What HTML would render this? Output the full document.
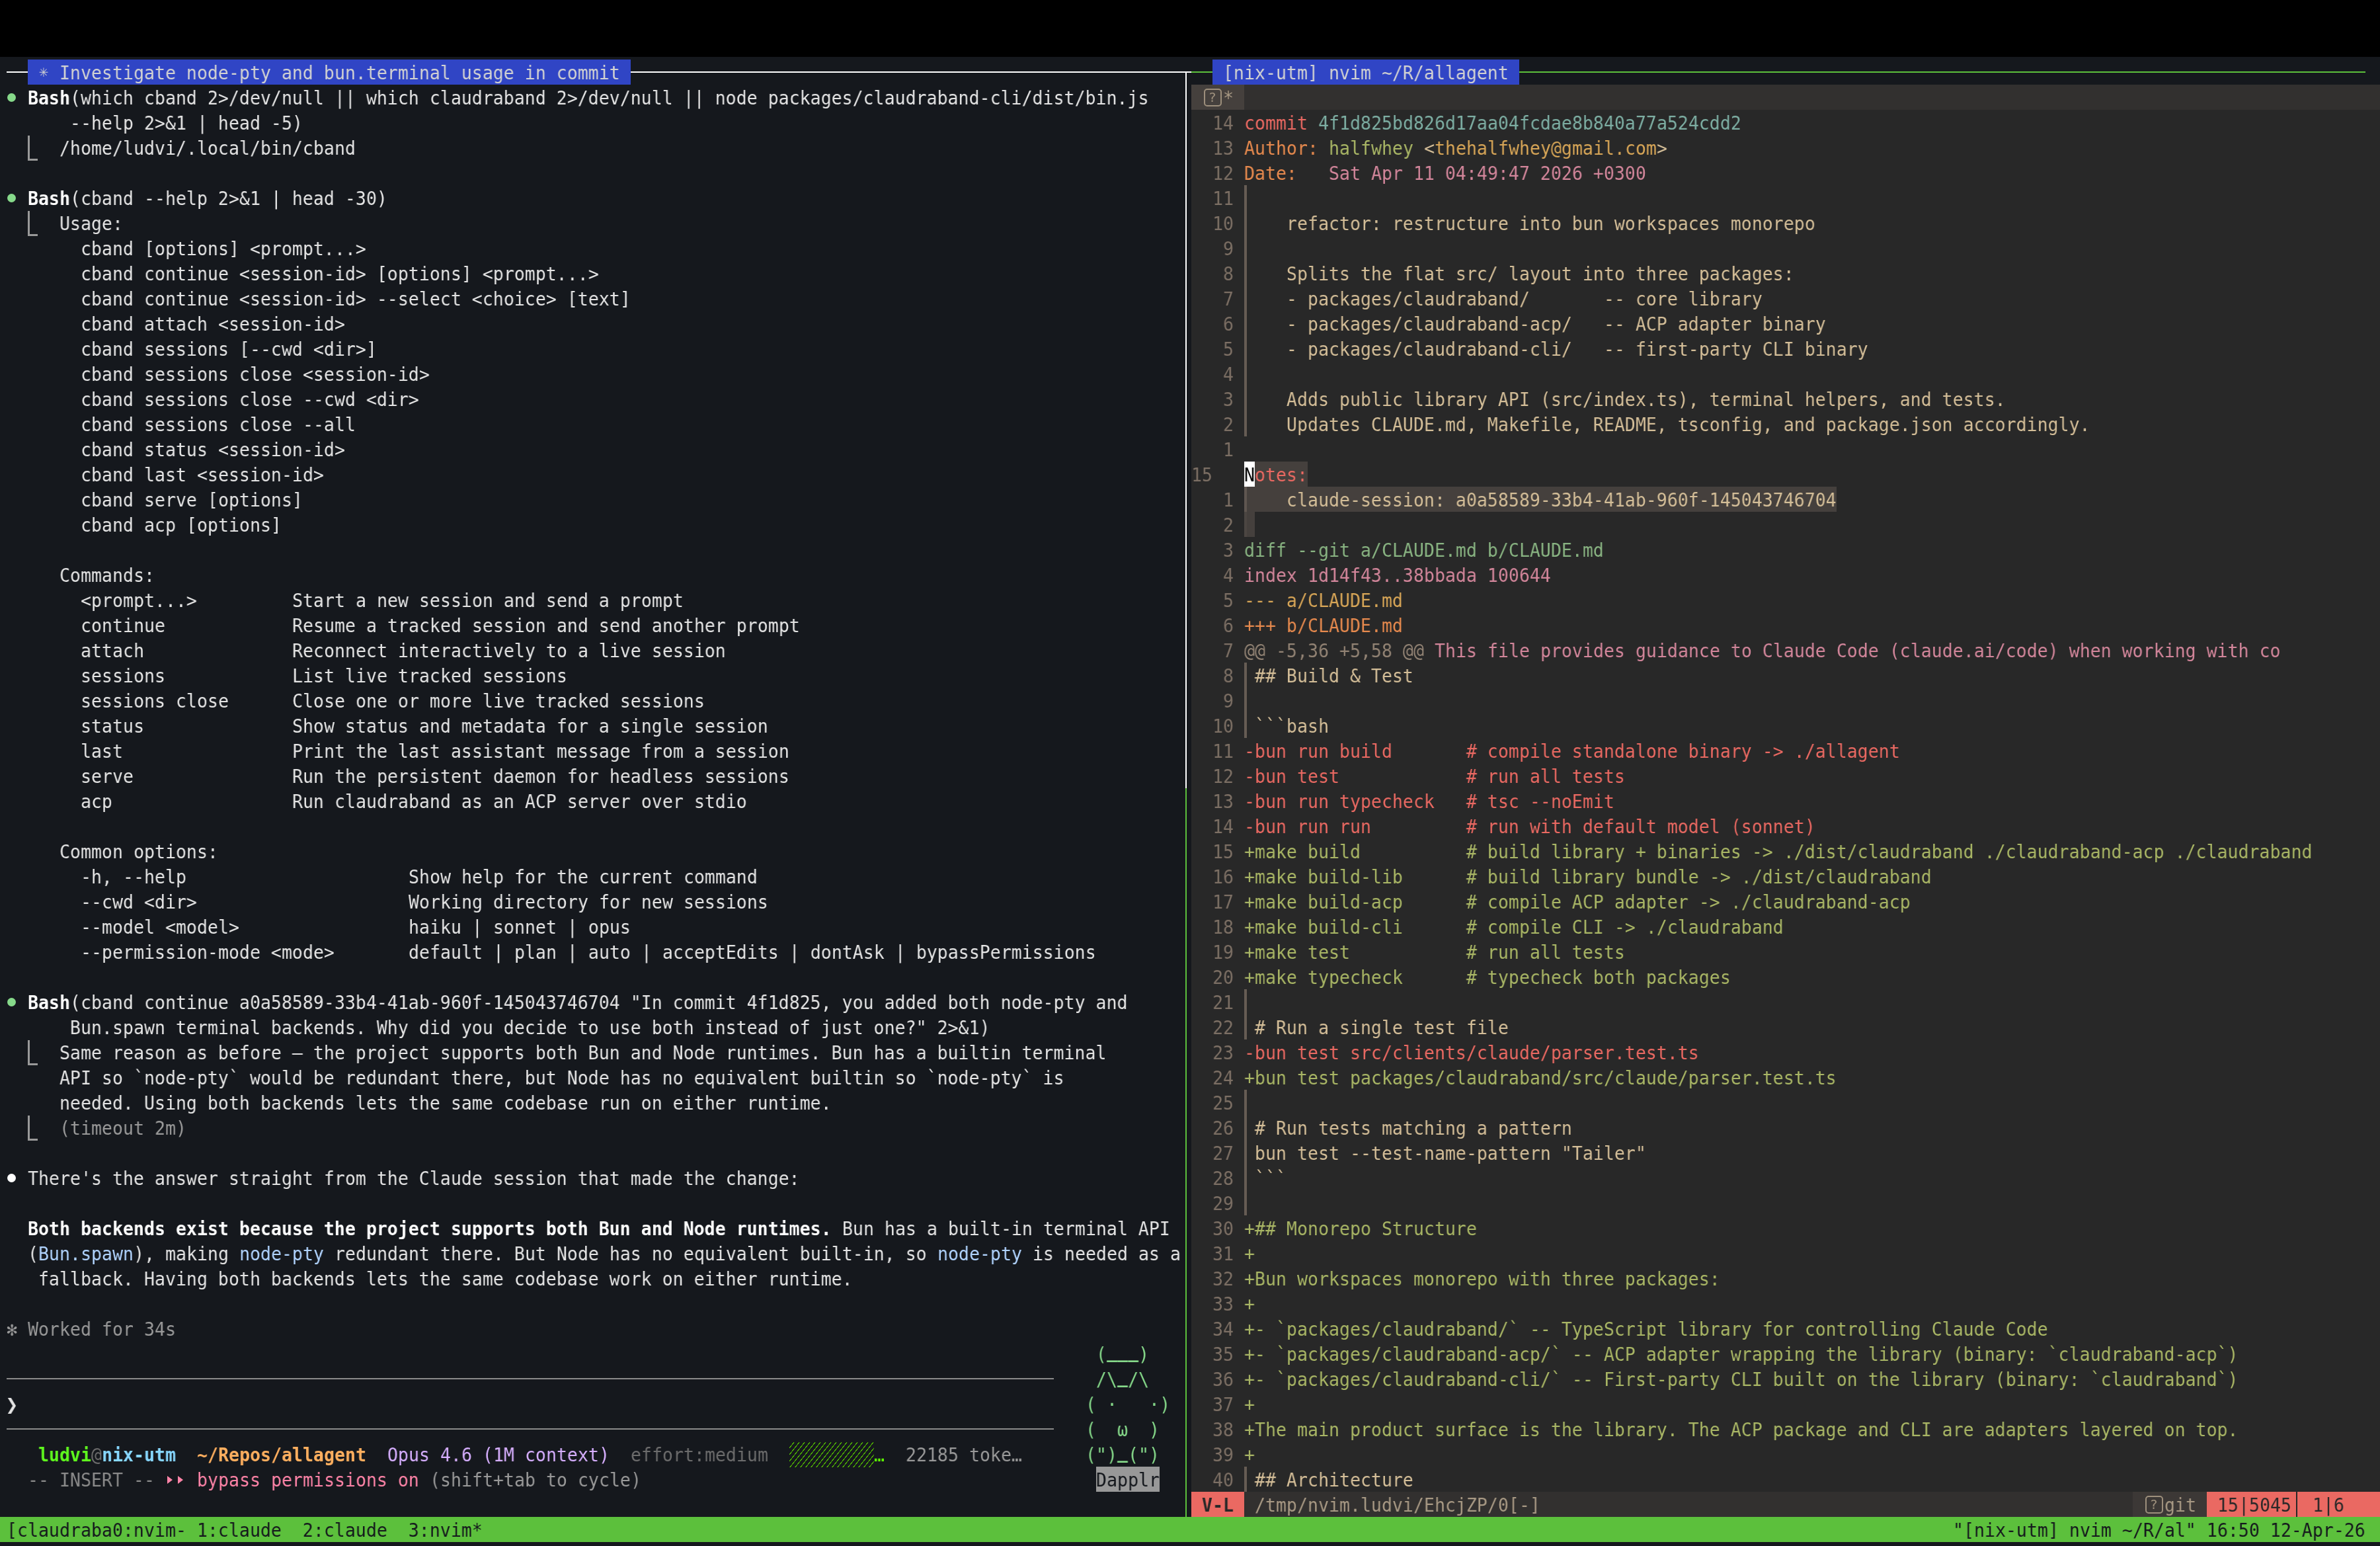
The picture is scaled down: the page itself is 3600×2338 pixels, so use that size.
<!DOCTYPE html>
<html lang="en"><head><meta charset="utf-8"><title>tmux</title>
<style>
html,body{margin:0;padding:0;background:#15181d;}
body{width:3600px;height:2338px;position:relative;overflow:hidden;font-family:"DejaVu Sans Mono","Liberation Mono",monospace;}
#sh{will-change:transform;}
#bg,#sh,#tx{position:absolute;left:0;top:0;width:3600px;height:2338px;}
#bg b,#sh i{position:absolute;display:block;}
#tx{will-change:transform;left:10px;width:3812.908px;transform:scaleX(0.93577);transform-origin:0 0;font-size:28.4px;line-height:38px;}
#tx span{position:absolute;white-space:pre;height:38px;font-kerning:none;font-variant-ligatures:none;}
#tx span.B{font-weight:bold;}
#sh i.ic{box-sizing:border-box;width:27px;height:27px;border:2.4px solid;border-radius:5px;font:normal 20px/22px "DejaVu Sans","Liberation Sans",sans-serif;text-align:center;}
</style></head><body>
<div id="bg"><b style="left:0px;top:0px;width:3600px;height:86px;background:#000000"></b><b style="left:1802px;top:128px;width:1798px;height:2166px;background:#282828"></b><b style="left:1802px;top:128px;width:1798px;height:38px;background:#32302f"></b><b style="left:1802px;top:128px;width:80px;height:38px;background:#45403d"></b><b style="left:0px;top:2294px;width:3600px;height:38px;background:#5cc03c"></b><b style="left:10px;top:108px;width:32px;height:2px;background:#ffffff"></b><b style="left:954px;top:108px;width:848px;height:2px;background:#ffffff"></b><b style="left:1802px;top:108px;width:32px;height:2px;background:#5cc03c"></b><b style="left:2298px;top:108px;width:1280px;height:2px;background:#5cc03c"></b><b style="left:1793px;top:108px;width:2px;height:1084px;background:#ffffff"></b><b style="left:1793px;top:1192px;width:2px;height:1102px;background:#5cc03c"></b><b style="left:42px;top:90px;width:912px;height:38px;background:#3045c5"></b><b style="left:1834px;top:90px;width:464px;height:38px;background:#3045c5"></b><b style="left:10px;top:2084px;width:1584px;height:2px;background:#8a8a8a"></b><b style="left:10px;top:2160px;width:1584px;height:2px;background:#8a8a8a"></b><b style="left:1658px;top:2218px;width:96px;height:38px;background:#989898"></b><b style="left:1882px;top:280px;width:4px;height:38px;background:#665c54"></b><b style="left:1882px;top:318px;width:4px;height:38px;background:#665c54"></b><b style="left:1882px;top:356px;width:4px;height:38px;background:#665c54"></b><b style="left:1882px;top:394px;width:4px;height:38px;background:#665c54"></b><b style="left:1882px;top:432px;width:4px;height:38px;background:#665c54"></b><b style="left:1882px;top:470px;width:4px;height:38px;background:#665c54"></b><b style="left:1882px;top:508px;width:4px;height:38px;background:#665c54"></b><b style="left:1882px;top:546px;width:4px;height:38px;background:#665c54"></b><b style="left:1882px;top:584px;width:4px;height:38px;background:#665c54"></b><b style="left:1882px;top:622px;width:4px;height:38px;background:#665c54"></b><b style="left:1882px;top:698px;width:96px;height:38px;background:#45403d"></b><b style="left:1882px;top:698px;width:16px;height:38px;background:#ffffff"></b><b style="left:1882px;top:736px;width:896px;height:38px;background:#45403d"></b><b style="left:1882px;top:736px;width:4px;height:38px;background:#5f5650"></b><b style="left:1882px;top:774px;width:16px;height:38px;background:#45403d"></b><b style="left:1882px;top:774px;width:4px;height:38px;background:#4c4642"></b><b style="left:1882px;top:1002px;width:4px;height:38px;background:#665c54"></b><b style="left:1882px;top:1040px;width:4px;height:38px;background:#665c54"></b><b style="left:1882px;top:1078px;width:4px;height:38px;background:#665c54"></b><b style="left:1882px;top:1496px;width:4px;height:38px;background:#665c54"></b><b style="left:1882px;top:1534px;width:4px;height:38px;background:#665c54"></b><b style="left:1882px;top:1648px;width:4px;height:38px;background:#665c54"></b><b style="left:1882px;top:1686px;width:4px;height:38px;background:#665c54"></b><b style="left:1882px;top:1724px;width:4px;height:38px;background:#665c54"></b><b style="left:1882px;top:1762px;width:4px;height:38px;background:#665c54"></b><b style="left:1882px;top:1800px;width:4px;height:38px;background:#665c54"></b><b style="left:1882px;top:2218px;width:4px;height:38px;background:#665c54"></b><b style="left:1802px;top:2256px;width:1798px;height:38px;background:#32302f"></b><b style="left:1802px;top:2256px;width:80px;height:38px;background:#ea6962"></b><b style="left:3226px;top:2256px;width:112px;height:38px;background:#3c3836"></b><b style="left:3338px;top:2256px;width:262px;height:38px;background:#ea6962"></b><b style="left:3473px;top:2256px;width:2px;height:38px;background:#282828"></b></div>
<div id="sh"><i style="left:11.0px;top:141.0px;width:13px;height:13px;border-radius:50%;background:#86d98a"></i><i style="left:42px;top:204.5px;width:3px;height:38px;background:#999999"></i><i style="left:42px;top:240px;width:15px;height:2.5px;background:#999999"></i><i style="left:11.0px;top:293.0px;width:13px;height:13px;border-radius:50%;background:#86d98a"></i><i style="left:42px;top:318.5px;width:3px;height:38px;background:#999999"></i><i style="left:42px;top:354px;width:15px;height:2.5px;background:#999999"></i><i style="left:11.0px;top:1509.0px;width:13px;height:13px;border-radius:50%;background:#86d98a"></i><i style="left:42px;top:1572.5px;width:3px;height:38px;background:#999999"></i><i style="left:42px;top:1608px;width:15px;height:2.5px;background:#999999"></i><i style="left:42px;top:1686.5px;width:3px;height:38px;background:#999999"></i><i style="left:42px;top:1722px;width:15px;height:2.5px;background:#999999"></i><i style="left:11.0px;top:1775.0px;width:13px;height:13px;border-radius:50%;background:#ffffff"></i><i style="left:1194px;top:2181px;width:128px;height:37.5px;background:repeating-linear-gradient(128.6deg,transparent 0,transparent 4.9px,#52bb00 5.1px,#52bb00 6.0px,transparent 6.25px)"></i><i style="left:253px;top:2232px;width:0;height:0;border-left:8px solid #ff84a8;border-top:6px solid transparent;border-bottom:6px solid transparent"></i><i style="left:269px;top:2232px;width:0;height:0;border-left:8px solid #ff84a8;border-top:6px solid transparent;border-bottom:6px solid transparent"></i><i class="ic" style="left:1820.5px;top:134px;border-color:#9d8f7c;color:#9d8f7c">?</i><i class="ic" style="left:3244.5px;top:2262px;border-color:#9d8f7c;color:#9d8f7c">?</i></div>
<div id="tx">
<span style="left:51.295px;top:91.5px;color:#d2d2d2;font-size:0.86em;margin:-2.5px 0 0 1.3px">✳</span>
<span style="left:85.491px;top:91.5px;color:#d2d2d2">Investigate node-pty and bun.terminal usage in commit</span>
<span style="left:1949.200px;top:91.5px;color:#d2d2d2"> [nix-utm] nvim ~/R/allagent </span>
<span class="B" style="left:34.196px;top:129.5px;color:#ffffff">Bash</span>
<span style="left:102.589px;top:129.5px;color:#e4e4e4">(which cband 2&gt;/dev/null || which claudraband 2&gt;/dev/null || node packages/claudraband-cli/dist/bin.js</span>
<span style="left:102.589px;top:167.5px;color:#e4e4e4">--help 2&gt;&amp;1 | head -5)</span>
<span style="left:85.491px;top:205.5px;color:#e4e4e4">/home/ludvi/.local/bin/cband</span>
<span class="B" style="left:34.196px;top:281.5px;color:#ffffff">Bash</span>
<span style="left:102.589px;top:281.5px;color:#e4e4e4">(cband --help 2&gt;&amp;1 | head -30)</span>
<span style="left:85.491px;top:319.5px;color:#e4e4e4">Usage:</span>
<span style="left:119.688px;top:357.5px;color:#e4e4e4">cband [options] &lt;prompt...&gt;</span>
<span style="left:119.688px;top:395.5px;color:#e4e4e4">cband continue &lt;session-id&gt; [options] &lt;prompt...&gt;</span>
<span style="left:119.688px;top:433.5px;color:#e4e4e4">cband continue &lt;session-id&gt; --select &lt;choice&gt; [text]</span>
<span style="left:119.688px;top:471.5px;color:#e4e4e4">cband attach &lt;session-id&gt;</span>
<span style="left:119.688px;top:509.5px;color:#e4e4e4">cband sessions [--cwd &lt;dir&gt;]</span>
<span style="left:119.688px;top:547.5px;color:#e4e4e4">cband sessions close &lt;session-id&gt;</span>
<span style="left:119.688px;top:585.5px;color:#e4e4e4">cband sessions close --cwd &lt;dir&gt;</span>
<span style="left:119.688px;top:623.5px;color:#e4e4e4">cband sessions close --all</span>
<span style="left:119.688px;top:661.5px;color:#e4e4e4">cband status &lt;session-id&gt;</span>
<span style="left:119.688px;top:699.5px;color:#e4e4e4">cband last &lt;session-id&gt;</span>
<span style="left:119.688px;top:737.5px;color:#e4e4e4">cband serve [options]</span>
<span style="left:119.688px;top:775.5px;color:#e4e4e4">cband acp [options]</span>
<span style="left:85.491px;top:851.5px;color:#e4e4e4">Commands:</span>
<span style="left:119.688px;top:889.5px;color:#e4e4e4">&lt;prompt...&gt;</span>
<span style="left:461.653px;top:889.5px;color:#e4e4e4">Start a new session and send a prompt</span>
<span style="left:119.688px;top:927.5px;color:#e4e4e4">continue</span>
<span style="left:461.653px;top:927.5px;color:#e4e4e4">Resume a tracked session and send another prompt</span>
<span style="left:119.688px;top:965.5px;color:#e4e4e4">attach</span>
<span style="left:461.653px;top:965.5px;color:#e4e4e4">Reconnect interactively to a live session</span>
<span style="left:119.688px;top:1003.5px;color:#e4e4e4">sessions</span>
<span style="left:461.653px;top:1003.5px;color:#e4e4e4">List live tracked sessions</span>
<span style="left:119.688px;top:1041.5px;color:#e4e4e4">sessions close</span>
<span style="left:461.653px;top:1041.5px;color:#e4e4e4">Close one or more live tracked sessions</span>
<span style="left:119.688px;top:1079.5px;color:#e4e4e4">status</span>
<span style="left:461.653px;top:1079.5px;color:#e4e4e4">Show status and metadata for a single session</span>
<span style="left:119.688px;top:1117.5px;color:#e4e4e4">last</span>
<span style="left:461.653px;top:1117.5px;color:#e4e4e4">Print the last assistant message from a session</span>
<span style="left:119.688px;top:1155.5px;color:#e4e4e4">serve</span>
<span style="left:461.653px;top:1155.5px;color:#e4e4e4">Run the persistent daemon for headless sessions</span>
<span style="left:119.688px;top:1193.5px;color:#e4e4e4">acp</span>
<span style="left:461.653px;top:1193.5px;color:#e4e4e4">Run claudraband as an ACP server over stdio</span>
<span style="left:85.491px;top:1269.5px;color:#e4e4e4">Common options:</span>
<span style="left:119.688px;top:1307.5px;color:#e4e4e4">-h, --help</span>
<span style="left:649.733px;top:1307.5px;color:#e4e4e4">Show help for the current command</span>
<span style="left:119.688px;top:1345.5px;color:#e4e4e4">--cwd &lt;dir&gt;</span>
<span style="left:649.733px;top:1345.5px;color:#e4e4e4">Working directory for new sessions</span>
<span style="left:119.688px;top:1383.5px;color:#e4e4e4">--model &lt;model&gt;</span>
<span style="left:649.733px;top:1383.5px;color:#e4e4e4">haiku | sonnet | opus</span>
<span style="left:119.688px;top:1421.5px;color:#e4e4e4">--permission-mode &lt;mode&gt;</span>
<span style="left:649.733px;top:1421.5px;color:#e4e4e4">default | plan | auto | acceptEdits | dontAsk | bypassPermissions</span>
<span class="B" style="left:34.196px;top:1497.5px;color:#ffffff">Bash</span>
<span style="left:102.589px;top:1497.5px;color:#e4e4e4">(cband continue a0a58589-33b4-41ab-960f-145043746704 "In commit 4f1d825, you added both node-pty and</span>
<span style="left:102.589px;top:1535.5px;color:#e4e4e4">Bun.spawn terminal backends. Why did you decide to use both instead of just one?" 2&gt;&amp;1)</span>
<span style="left:85.491px;top:1573.5px;color:#e4e4e4">Same reason as before — the project supports both Bun and Node runtimes. Bun has a builtin terminal</span>
<span style="left:85.491px;top:1611.5px;color:#e4e4e4">API so `node-pty` would be redundant there, but Node has no equivalent builtin so `node-pty` is</span>
<span style="left:85.491px;top:1649.5px;color:#e4e4e4">needed. Using both backends lets the same codebase run on either runtime.</span>
<span style="left:85.491px;top:1687.5px;color:#999999">(timeout 2m)</span>
<span style="left:34.196px;top:1763.5px;color:#e4e4e4">There's the answer straight from the Claude session that made the change:</span>
<span class="B" style="left:34.196px;top:1839.5px;color:#ffffff">Both backends exist because the project supports both Bun and Node runtimes.</span>
<span style="left:1333.663px;top:1839.5px;color:#e4e4e4"> Bun has a built-in terminal API</span>
<span style="left:34.196px;top:1877.5px;color:#e4e4e4">(</span>
<span style="left:51.295px;top:1877.5px;color:#b1d4ff">Bun.spawn</span>
<span style="left:205.179px;top:1877.5px;color:#e4e4e4">), making </span>
<span style="left:376.161px;top:1877.5px;color:#b1d4ff">node-pty</span>
<span style="left:512.947px;top:1877.5px;color:#e4e4e4"> redundant there. But Node has no equivalent built-in, so </span>
<span style="left:1504.645px;top:1877.5px;color:#b1d4ff">node-pty</span>
<span style="left:1641.431px;top:1877.5px;color:#e4e4e4"> is needed as a</span>
<span style="left:51.295px;top:1915.5px;color:#e4e4e4">fallback. Having both backends lets the same codebase work on either runtime.</span>
<span style="left:0.000px;top:1991.5px;color:#999999">✻</span>
<span style="left:17.098px;top:1991.5px;color:#999999"> Worked for 34s</span>
<span style="left:0.000px;top:2105.5px;color:#e4e4e4;font-size:1.16em;margin:-1px 0 0 -1.5px">❯</span>
<span class="B" style="left:51.295px;top:2181.5px;color:#5ffa1e">ludvi</span>
<span style="left:136.786px;top:2181.5px;color:#6c6c6c">@</span>
<span class="B" style="left:153.884px;top:2181.5px;color:#87d7ff">nix-utm</span>
<span style="left:273.572px;top:2181.5px;color:#e4e4e4">  </span>
<span class="B" style="left:307.768px;top:2181.5px;color:#ffaf5f">~/Repos/allagent</span>
<span style="left:581.340px;top:2181.5px;color:#e4e4e4">  </span>
<span style="left:615.537px;top:2181.5px;color:#d7afff">Opus 4.6 (1M context)</span>
<span style="left:974.600px;top:2181.5px;color:#e4e4e4">  </span>
<span style="left:1008.796px;top:2181.5px;color:#6c6c6c">effort:medium</span>
<span style="left:1402.056px;top:2181.5px;color:#5fff00">…</span>
<span style="left:1453.351px;top:2181.5px;color:#999999">22185 toke…</span>
<span style="left:34.196px;top:2219.5px;color:#8a8a8a">-- INSERT --</span>
<span style="left:307.768px;top:2219.5px;color:#ff84a8">bypass permissions on</span>
<span style="left:666.831px;top:2219.5px;color:#999999"> (shift+tab to cycle)</span>
<span style="left:1761.119px;top:2029.5px;color:#86d98a">(</span>
<span style="left:1778.217px;top:2029.5px;color:#86d98a;margin-top:-4.5px;font-weight:bold">___</span>
<span style="left:1829.512px;top:2029.5px;color:#86d98a">)</span>
<span style="left:1761.119px;top:2067.5px;color:#86d98a">/\</span>
<span style="left:1795.315px;top:2067.5px;color:#86d98a;margin-top:-4.5px;font-weight:bold">_</span>
<span style="left:1812.414px;top:2067.5px;color:#86d98a">/\</span>
<span style="left:1744.021px;top:2105.5px;color:#86d98a">( ·   ·)</span>
<span style="left:1744.021px;top:2143.5px;color:#86d98a">(  ω  )</span>
<span style="left:1744.021px;top:2181.5px;color:#86d98a">(")</span>
<span style="left:1795.315px;top:2181.5px;color:#86d98a;margin-top:-4.5px;font-weight:bold">_</span>
<span style="left:1812.414px;top:2181.5px;color:#86d98a">(")</span>
<span style="left:1761.119px;top:2219.5px;color:#15181d">Dapplr</span>
<span style="left:1966.298px;top:129.5px;color:#a89984">*</span>
<span style="left:1949.200px;top:167.5px;color:#7c6f64">14</span>
<span style="left:2000.494px;top:167.5px;color:#ea6962">commit</span>
<span style="left:2103.084px;top:167.5px;color:#7daea3"> 4f1d825bd826d17aa04fcdae8b840a77a524cdd2</span>
<span style="left:1949.200px;top:205.5px;color:#7c6f64">13</span>
<span style="left:2000.494px;top:205.5px;color:#e78a4e">Author:</span>
<span style="left:2120.182px;top:205.5px;color:#a9b665"> halfwhey</span>
<span style="left:2274.066px;top:205.5px;color:#d4be98"> &lt;</span>
<span style="left:2308.263px;top:205.5px;color:#d8a657">thehalfwhey@gmail.com</span>
<span style="left:2667.326px;top:205.5px;color:#d4be98">&gt;</span>
<span style="left:1949.200px;top:243.5px;color:#7c6f64">12</span>
<span style="left:2000.494px;top:243.5px;color:#e78a4e">Date:</span>
<span style="left:2085.986px;top:243.5px;color:#d3869b">   Sat Apr 11 04:49:47 2026 +0300</span>
<span style="left:1949.200px;top:281.5px;color:#7c6f64">11</span>
<span style="left:1949.200px;top:319.5px;color:#7c6f64">10</span>
<span style="left:2000.494px;top:319.5px;color:#d4be98">    refactor: restructure into bun workspaces monorepo</span>
<span style="left:1966.298px;top:357.5px;color:#7c6f64">9</span>
<span style="left:1966.298px;top:395.5px;color:#7c6f64">8</span>
<span style="left:2000.494px;top:395.5px;color:#d4be98">    Splits the flat src/ layout into three packages:</span>
<span style="left:1966.298px;top:433.5px;color:#7c6f64">7</span>
<span style="left:2000.494px;top:433.5px;color:#d4be98">    - packages/claudraband/       -- core library</span>
<span style="left:1966.298px;top:471.5px;color:#7c6f64">6</span>
<span style="left:2000.494px;top:471.5px;color:#d4be98">    - packages/claudraband-acp/   -- ACP adapter binary</span>
<span style="left:1966.298px;top:509.5px;color:#7c6f64">5</span>
<span style="left:2000.494px;top:509.5px;color:#d4be98">    - packages/claudraband-cli/   -- first-party CLI binary</span>
<span style="left:1966.298px;top:547.5px;color:#7c6f64">4</span>
<span style="left:1966.298px;top:585.5px;color:#7c6f64">3</span>
<span style="left:2000.494px;top:585.5px;color:#d4be98">    Adds public library API (src/index.ts), terminal helpers, and tests.</span>
<span style="left:1966.298px;top:623.5px;color:#7c6f64">2</span>
<span style="left:2000.494px;top:623.5px;color:#d4be98">    Updates CLAUDE.md, Makefile, README, tsconfig, and package.json accordingly.</span>
<span style="left:1966.298px;top:661.5px;color:#7c6f64">1</span>
<span style="left:1915.003px;top:699.5px;color:#7c6f64">15</span>
<span style="left:2000.494px;top:699.5px;color:#000000">N</span>
<span style="left:2017.593px;top:699.5px;color:#ea6962">otes:</span>
<span style="left:1966.298px;top:737.5px;color:#7c6f64">1</span>
<span style="left:2000.494px;top:737.5px;color:#d4be98">    claude-session: a0a58589-33b4-41ab-960f-145043746704</span>
<span style="left:1966.298px;top:775.5px;color:#7c6f64">2</span>
<span style="left:1966.298px;top:813.5px;color:#7c6f64">3</span>
<span style="left:2000.494px;top:813.5px;color:#89b482">diff --git a/CLAUDE.md b/CLAUDE.md</span>
<span style="left:1966.298px;top:851.5px;color:#7c6f64">4</span>
<span style="left:2000.494px;top:851.5px;color:#d3869b">index 1d14f43..38bbada 100644</span>
<span style="left:1966.298px;top:889.5px;color:#7c6f64">5</span>
<span style="left:2000.494px;top:889.5px;color:#d8a657">--- a/CLAUDE.md</span>
<span style="left:1966.298px;top:927.5px;color:#7c6f64">6</span>
<span style="left:2000.494px;top:927.5px;color:#e78a4e">+++ b/CLAUDE.md</span>
<span style="left:1966.298px;top:965.5px;color:#7c6f64">7</span>
<span style="left:2000.494px;top:965.5px;color:#928374">@@ -5,36 +5,58 @@</span>
<span style="left:2291.164px;top:965.5px;color:#d3869b"> This file provides guidance to Claude Code (claude.ai/code) when working with co</span>
<span style="left:1966.298px;top:1003.5px;color:#7c6f64">8</span>
<span style="left:2000.494px;top:1003.5px;color:#d4be98"> ## Build &amp; Test</span>
<span style="left:1966.298px;top:1041.5px;color:#7c6f64">9</span>
<span style="left:1949.200px;top:1079.5px;color:#7c6f64">10</span>
<span style="left:2000.494px;top:1079.5px;color:#d4be98"> ```bash</span>
<span style="left:1949.200px;top:1117.5px;color:#7c6f64">11</span>
<span style="left:2000.494px;top:1117.5px;color:#ea6962">-bun run build       # compile standalone binary -&gt; ./allagent</span>
<span style="left:1949.200px;top:1155.5px;color:#7c6f64">12</span>
<span style="left:2000.494px;top:1155.5px;color:#ea6962">-bun test            # run all tests</span>
<span style="left:1949.200px;top:1193.5px;color:#7c6f64">13</span>
<span style="left:2000.494px;top:1193.5px;color:#ea6962">-bun run typecheck   # tsc --noEmit</span>
<span style="left:1949.200px;top:1231.5px;color:#7c6f64">14</span>
<span style="left:2000.494px;top:1231.5px;color:#ea6962">-bun run run         # run with default model (sonnet)</span>
<span style="left:1949.200px;top:1269.5px;color:#7c6f64">15</span>
<span style="left:2000.494px;top:1269.5px;color:#a9b665">+make build          # build library + binaries -&gt; ./dist/claudraband ./claudraband-acp ./claudraband</span>
<span style="left:1949.200px;top:1307.5px;color:#7c6f64">16</span>
<span style="left:2000.494px;top:1307.5px;color:#a9b665">+make build-lib      # build library bundle -&gt; ./dist/claudraband</span>
<span style="left:1949.200px;top:1345.5px;color:#7c6f64">17</span>
<span style="left:2000.494px;top:1345.5px;color:#a9b665">+make build-acp      # compile ACP adapter -&gt; ./claudraband-acp</span>
<span style="left:1949.200px;top:1383.5px;color:#7c6f64">18</span>
<span style="left:2000.494px;top:1383.5px;color:#a9b665">+make build-cli      # compile CLI -&gt; ./claudraband</span>
<span style="left:1949.200px;top:1421.5px;color:#7c6f64">19</span>
<span style="left:2000.494px;top:1421.5px;color:#a9b665">+make test           # run all tests</span>
<span style="left:1949.200px;top:1459.5px;color:#7c6f64">20</span>
<span style="left:2000.494px;top:1459.5px;color:#a9b665">+make typecheck      # typecheck both packages</span>
<span style="left:1949.200px;top:1497.5px;color:#7c6f64">21</span>
<span style="left:1949.200px;top:1535.5px;color:#7c6f64">22</span>
<span style="left:2000.494px;top:1535.5px;color:#d4be98"> # Run a single test file</span>
<span style="left:1949.200px;top:1573.5px;color:#7c6f64">23</span>
<span style="left:2000.494px;top:1573.5px;color:#ea6962">-bun test src/clients/claude/parser.test.ts</span>
<span style="left:1949.200px;top:1611.5px;color:#7c6f64">24</span>
<span style="left:2000.494px;top:1611.5px;color:#a9b665">+bun test packages/claudraband/src/claude/parser.test.ts</span>
<span style="left:1949.200px;top:1649.5px;color:#7c6f64">25</span>
<span style="left:1949.200px;top:1687.5px;color:#7c6f64">26</span>
<span style="left:2000.494px;top:1687.5px;color:#d4be98"> # Run tests matching a pattern</span>
<span style="left:1949.200px;top:1725.5px;color:#7c6f64">27</span>
<span style="left:2000.494px;top:1725.5px;color:#d4be98"> bun test --test-name-pattern "Tailer"</span>
<span style="left:1949.200px;top:1763.5px;color:#7c6f64">28</span>
<span style="left:2000.494px;top:1763.5px;color:#d4be98"> ```</span>
<span style="left:1949.200px;top:1801.5px;color:#7c6f64">29</span>
<span style="left:1949.200px;top:1839.5px;color:#7c6f64">30</span>
<span style="left:2000.494px;top:1839.5px;color:#a9b665">+## Monorepo Structure</span>
<span style="left:1949.200px;top:1877.5px;color:#7c6f64">31</span>
<span style="left:2000.494px;top:1877.5px;color:#a9b665">+</span>
<span style="left:1949.200px;top:1915.5px;color:#7c6f64">32</span>
<span style="left:2000.494px;top:1915.5px;color:#a9b665">+Bun workspaces monorepo with three packages:</span>
<span style="left:1949.200px;top:1953.5px;color:#7c6f64">33</span>
<span style="left:2000.494px;top:1953.5px;color:#a9b665">+</span>
<span style="left:1949.200px;top:1991.5px;color:#7c6f64">34</span>
<span style="left:2000.494px;top:1991.5px;color:#a9b665">+- `packages/claudraband/` -- TypeScript library for controlling Claude Code</span>
<span style="left:1949.200px;top:2029.5px;color:#7c6f64">35</span>
<span style="left:2000.494px;top:2029.5px;color:#a9b665">+- `packages/claudraband-acp/` -- ACP adapter wrapping the library (binary: `claudraband-acp`)</span>
<span style="left:1949.200px;top:2067.5px;color:#7c6f64">36</span>
<span style="left:2000.494px;top:2067.5px;color:#a9b665">+- `packages/claudraband-cli/` -- First-party CLI built on the library (binary: `claudraband`)</span>
<span style="left:1949.200px;top:2105.5px;color:#7c6f64">37</span>
<span style="left:2000.494px;top:2105.5px;color:#a9b665">+</span>
<span style="left:1949.200px;top:2143.5px;color:#7c6f64">38</span>
<span style="left:2000.494px;top:2143.5px;color:#a9b665">+The main product surface is the library. The ACP package and CLI are adapters layered on top.</span>
<span style="left:1949.200px;top:2181.5px;color:#7c6f64">39</span>
<span style="left:2000.494px;top:2181.5px;color:#a9b665">+</span>
<span style="left:1949.200px;top:2219.5px;color:#7c6f64">40</span>
<span style="left:2000.494px;top:2219.5px;color:#d4be98"> ## Architecture</span>
<span class="B" style="left:1932.101px;top:2257.5px;color:#282828">V-L</span>
<span style="left:2017.593px;top:2257.5px;color:#a89984">/tmp/nvim.ludvi/EhcjZP/0[-]</span>
<span style="left:3488.041px;top:2257.5px;color:#a89984">git</span>
<span style="left:3573.533px;top:2257.5px;color:#282828">15|5045</span>
<span style="left:3727.417px;top:2257.5px;color:#282828">1|6</span>
<span style="left:0.000px;top:2295.5px;color:#15181d">[claudraba0:nvim- 1:claude  2:claude  3:nvim*</span>
<span style="left:3146.077px;top:2295.5px;color:#15181d">"[nix-utm] nvim ~/R/al" 16:50 12-Apr-26</span>
</div>
</body></html>
